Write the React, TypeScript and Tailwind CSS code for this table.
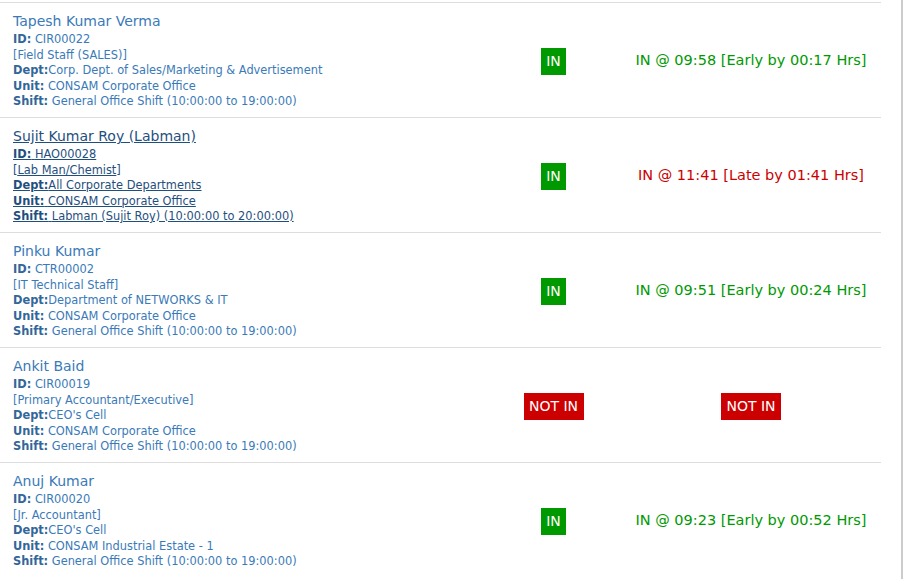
const staff = [
  {
    name: "Tapesh Kumar Verma",
    id: "CIR00022",
    role: "Field Staff (SALES)",
    dept: "Corp. Dept. of Sales/Marketing & Advertisement",
    unit: "CONSAM Corporate Office",
    shift: "General Office Shift (10:00:00 to 19:00:00)",
    present: true,
    status: "IN @ 09:58 [Early by 00:17 Hrs]",
    late: false,
  },
  {
    name: "Sujit Kumar Roy (Labman)",
    id: "HAO00028",
    role: "Lab Man/Chemist",
    dept: "All Corporate Departments",
    unit: "CONSAM Corporate Office",
    shift: "Labman (Sujit Roy) (10:00:00 to 20:00:00)",
    present: true,
    status: "IN @ 11:41 [Late by 01:41 Hrs]",
    late: true,
    hover: true,
  },
  {
    name: "Pinku Kumar",
    id: "CTR00002",
    role: "IT Technical Staff",
    dept: "Department of NETWORKS & IT",
    unit: "CONSAM Corporate Office",
    shift: "General Office Shift (10:00:00 to 19:00:00)",
    present: true,
    status: "IN @ 09:51 [Early by 00:24 Hrs]",
    late: false,
  },
  {
    name: "Ankit Baid",
    id: "CIR00019",
    role: "Primary Accountant/Executive",
    dept: "CEO's Cell",
    unit: "CONSAM Corporate Office",
    shift: "General Office Shift (10:00:00 to 19:00:00)",
    present: false,
    status: "",
    late: false,
  },
  {
    name: "Anuj Kumar",
    id: "CIR00020",
    role: "Jr. Accountant",
    dept: "CEO's Cell",
    unit: "CONSAM Industrial Estate - 1",
    shift: "General Office Shift (10:00:00 to 19:00:00)",
    present: true,
    status: "IN @ 09:23 [Early by 00:52 Hrs]",
    late: false,
  },
]

const NotIn = () => (
  <span className="inline-flex h-[27px] w-[60px] items-center justify-center bg-[#cc0000] text-[14px] text-white">NOT IN</span>
)

const App = () => {
  return (
    <div className="h-[579px] w-[904px] overflow-hidden bg-white font-['DejaVu_Sans',Verdana,sans-serif]">
      <div className="flex h-full">
        <div className="w-[881px] pt-[2px]">
          {staff.map((s) => (
            <div key={s.id} className="grid grid-cols-[455px_197px_229px] border-t border-[#dddddd]">
              <div className={"pl-[13px] pt-[8px] pb-[7.5px] " + (s.hover ? "text-[#1f4f7e] underline" : "text-[#3a7ab8]")}>
                <div className="text-[14px] leading-[20px]">{s.name}</div>
                <div className="pt-[1px] text-[11.4px] leading-[15.5px]">
                  <div><b className={s.hover ? "text-[#1f4f7e]" : "text-[#336699]"}>ID:</b> {s.id}</div>
                  <div>[{s.role}]</div>
                  <div><b className={s.hover ? "text-[#1f4f7e]" : "text-[#336699]"}>Dept:</b>{s.dept}</div>
                  <div><b className={s.hover ? "text-[#1f4f7e]" : "text-[#336699]"}>Unit:</b> {s.unit}</div>
                  <div><b className={s.hover ? "text-[#1f4f7e]" : "text-[#336699]"}>Shift:</b> {s.shift}</div>
                </div>
              </div>
              <div className="flex items-center justify-center pt-[2px]">
                {s.present ? (
                  <span className="inline-flex h-[27px] w-[25px] items-center justify-center bg-[#009900] text-[14px] text-white">IN</span>
                ) : (
                  <NotIn />
                )}
              </div>
              <div className="flex items-center justify-center pr-[31px] pt-[2px]">
                {s.present ? (
                  <span className={"whitespace-nowrap text-[14.5px] " + (s.late ? "text-[#cc0000]" : "text-[#009900]")}>{s.status}</span>
                ) : (
                  <NotIn />
                )}
              </div>
            </div>
          ))}
        </div>
        <div className="flex-1" />
        <div className="mr-[1px] w-[2px] bg-[#cccccc]" />
      </div>
    </div>
  )
}

export default App
